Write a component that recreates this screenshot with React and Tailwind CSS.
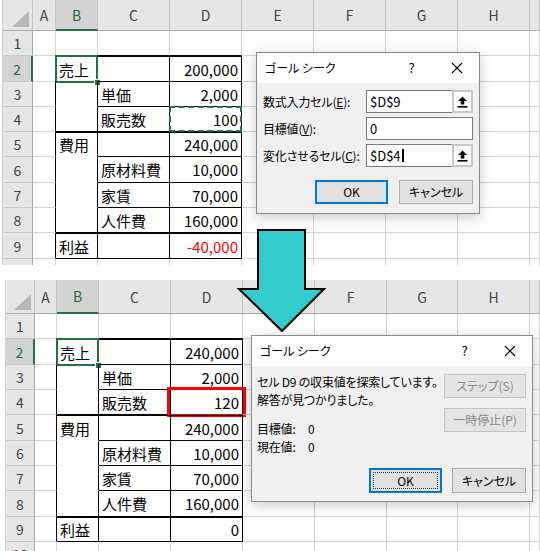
import React from 'react';

const JP = "font-['Noto_Sans_CJK_JP',sans-serif]";
const PALT = '[font-feature-settings:"palt"]';

const TOP_ROWS = [
  { b: '売上', d: '200,000' },
  { c: '単価', d: '2,000' },
  { c: '販売数', d: '100' },
  { b: '費用', d: '240,000' },
  { c: '原材料費', d: '10,000' },
  { c: '家賃', d: '70,000' },
  { c: '人件費', d: '160,000' },
  { b: '利益', d: '-40,000', red: true },
];

const BOTTOM_ROWS = [
  { b: '売上', d: '240,000' },
  { c: '単価', d: '2,000' },
  { c: '販売数', d: '120' },
  { b: '費用', d: '240,000' },
  { c: '原材料費', d: '10,000' },
  { c: '家賃', d: '70,000' },
  { c: '人件費', d: '160,000' },
  { b: '利益', d: '0' },
];

const LETTERS = ['', '', 'A', 'B', 'C', 'D', 'E', 'F', 'G', 'H', ''];

// 0 strip, 1 row header, 2 A, 3 B, 4 C, 5 D ...
function cellBorder(r, c) {
  let right = 'border-r-[#d4d4d4]';
  let bottom = 'border-b-[#d4d4d4]';
  let top = '';
  const inTable = r >= 2 && r <= 9;
  if (inTable && c >= 2 && c <= 5) right = 'border-r-black';
  if (r === 1 && c >= 3 && c <= 5) bottom = 'border-b-black';
  if (inTable && c >= 3 && c <= 5) {
    if (r === 2 || r === 5 || r === 9) top = 'border-t border-t-black';
    if (c === 3) {
      bottom = r === 4 || r === 8 || r === 9 ? 'border-b-black' : 'border-b-white';
    } else {
      bottom = 'border-b-black';
    }
  }
  return `border-r border-b ${right} ${bottom} ${top}`;
}

function Sheet({ cols, headerH, rowHs, rows, mark, height, showLast }) {
  return (
    <div className={`${height} overflow-hidden bg-white ${JP}`}>
      {/* column headers */}
      <div className={`flex ${headerH}`}>
        {cols.map((w, i) => {
          if (i === 0) {
            return <div key={i} className={`${w} h-full shrink-0 bg-white border-r border-[#d4d4d4]`} />;
          }
          if (i === 1) {
            return (
              <div
                key={i}
                className={`${w} h-full shrink-0 relative bg-[#e6e6e6] border-r border-b border-r-[#c4c4c4] border-b-[#ababab]`}
              >
                <svg className="absolute right-[2px] bottom-[3px]" width="18" height="16" viewBox="0 0 18 16">
                  <polygon points="17,0 17,16 0,16" fill="#b9b9b9" />
                </svg>
              </div>
            );
          }
          const sel = i === 3;
          return (
            <div
              key={i}
              className={`${w} h-full shrink-0 flex items-center justify-center text-[14px] leading-none border-r border-r-[#c4c4c4] ${
                sel
                  ? 'bg-[#d3d3d3] text-[#1e6b42] border-b-2 border-b-[#217346]'
                  : 'bg-[#e6e6e6] text-[#444] border-b border-b-[#ababab]'
              }`}
            >
              {LETTERS[i]}
            </div>
          );
        })}
      </div>

      {/* rows */}
      {rowHs.map((h, ri) => {
        const r = ri + 1;
        const row = r >= 2 && r <= 9 ? rows[r - 2] : null;
        return (
          <div key={r} className={`flex ${h}`}>
            {cols.map((w, c) => {
              if (c === 0) {
                return <div key={c} className={`${w} h-full shrink-0 bg-white border-r border-[#d4d4d4]`} />;
              }
              if (c === 1) {
                const sel = r === 2;
                return (
                  <div
                    key={c}
                    className={`${w} h-full shrink-0 flex items-center justify-center text-[14px] leading-none border-b border-b-[#c8c8c8] ${
                      sel
                        ? 'bg-[#d3d3d3] text-[#1e6b42] border-r-2 border-r-[#217346]'
                        : 'bg-[#e6e6e6] text-[#444] border-r border-r-[#ababab]'
                    }`}
                  >
                    {r < 10 || showLast ? r : null}
                  </div>
                );
              }
              let text = null;
              let right = false;
              let red = false;
              if (row) {
                if (c === 3) text = row.b;
                if (c === 4) text = row.c;
                if (c === 5) {
                  text = row.d;
                  right = true;
                  red = !!row.red;
                }
              }
              return (
                <div
                  key={c}
                  className={`${w} h-full shrink-0 relative flex items-center px-[3px] text-[15px] leading-none whitespace-nowrap ${
                    right ? 'justify-end' : ''
                  } ${red ? 'text-[#ff0000]' : 'text-black'} ${cellBorder(r, c)}`}
                >
                  {text}
                  {r === 2 && c === 3 && (
                    <>
                      <div className="absolute left-[-1px] top-[-2px] right-[-1px] bottom-[-2px] border-2 border-[#217346]" />
                      <div className="absolute right-[-4px] bottom-[-5px] w-[7px] h-[7px] bg-[#217346] border border-white" />
                    </>
                  )}
                  {r === 4 && c === 5 && mark === 'ants' && (
                    <div className="absolute -inset-px border-2 border-dashed border-[#217346]" />
                  )}
                  {r === 4 && c === 5 && mark === 'red' && (
                    <div className="absolute left-[-4px] top-[-3px] right-[-4px] bottom-[-3px] border-[3px] border-[#ff0000]" />
                  )}
                </div>
              );
            })}
          </div>
        );
      })}
    </div>
  );
}

function CloseIcon() {
  return (
    <svg width="12" height="12" viewBox="0 0 12 12">
      <path d="M1 1 L11 11 M11 1 L1 11" stroke="#000" strokeWidth="1.1" />
    </svg>
  );
}

function TitleBar({ title }) {
  return (
    <div className="h-[30px] bg-white flex items-center shrink-0">
      <span className="pl-[8px] text-[12px] text-black leading-none whitespace-nowrap">{title}</span>
      <div className="ml-auto w-[45px] h-full flex items-center justify-center text-[13px] text-black">?</div>
      <div className="w-[45px] h-full flex items-center justify-center">
        <CloseIcon />
      </div>
    </div>
  );
}

function CollapseIcon() {
  return (
    <svg width="11" height="12" viewBox="0 0 11 12">
      <path d="M5.5 0.5 L10 5 H7.3 V8.5 H3.7 V5 H1 Z" fill="#000" />
      <rect x="0.5" y="10" width="10" height="1.6" fill="#000" />
    </svg>
  );
}

function RefInput({ value, caret }) {
  return (
    <div className="w-[107px] h-[23px] flex">
      <div className="flex-1 h-full bg-white border border-[#7a7a7a] border-r-0 flex items-center pl-[3px] text-[13px] leading-none text-black">
        {value}
        {caret && <span className="inline-block w-[2px] h-[13px] bg-black ml-[1px]" />}
      </div>
      <div className="w-[21px] h-full bg-white border-2 border-[#c7c7c7] flex items-center justify-center">
        <CollapseIcon />
      </div>
    </div>
  );
}

function WinButton({ children, focus, disabled, w }) {
  return (
    <div
      className={`${w} h-full relative flex items-center justify-center text-[12px] leading-none whitespace-nowrap ${
        focus
          ? 'bg-[#e1e1e1] border-2 border-[#0078d7] text-black'
          : disabled
          ? 'bg-[#e4e4e4] border border-[#c4c4c4] text-[#8a8a8a]'
          : 'bg-[#e1e1e1] border border-[#adadad] text-black'
      }`}
    >
      {children}
    </div>
  );
}

function GoalSeekDialog() {
  return (
    <div
      className={`absolute left-[256px] top-[52px] w-[224px] h-[162px] bg-[#f0f0f0] border border-[#8a8a8a] shadow-[0_3px_12px_rgba(0,0,0,0.22)] flex flex-col ${JP} ${PALT}`}
    >
      <TitleBar title="ゴール シーク" />
      <div className="pl-[6px] pt-[7px] flex flex-col gap-[4px]">
        <div className="flex items-center h-[23px]">
          <span className="w-[103px] text-[12px] leading-none text-black whitespace-nowrap tracking-[-0.2px]">
            数式入力セル(<span className="underline">E</span>):
          </span>
          <RefInput value="$D$9" />
        </div>
        <div className="flex items-center h-[23px]">
          <span className="w-[103px] text-[12px] leading-none text-black whitespace-nowrap tracking-[-0.2px]">
            目標値(<span className="underline">V</span>):
          </span>
          <div className="w-[107px] h-full bg-white border border-[#7a7a7a] flex items-center pl-[3px] text-[13px] leading-none text-black">
            0
          </div>
        </div>
        <div className="flex items-center h-[23px]">
          <span className="w-[103px] text-[12px] leading-none text-black whitespace-nowrap tracking-[-0.2px]">
            変化させるセル(<span className="underline">C</span>):
          </span>
          <RefInput value="$D$4" caret />
        </div>
      </div>
      <div className="mt-[13px] h-[24px] flex justify-end gap-[11px] pr-[6px]">
        <WinButton w="w-[73px]" focus>
          OK
        </WinButton>
        <WinButton w="w-[74px]">キャンセル</WinButton>
      </div>
    </div>
  );
}

function StatusDialog() {
  return (
    <div
      className={`absolute left-[251px] top-[335px] w-[282px] h-[167px] bg-[#f0f0f0] border border-[#8a8a8a] shadow-[0_3px_12px_rgba(0,0,0,0.22)] flex flex-col ${JP} ${PALT}`}
    >
      <TitleBar title="ゴール シーク" />
      <div className="h-[102px] flex shrink-0">
        <div className="flex-1 min-w-0 pl-[5px] pt-[7px] text-[12px] text-black whitespace-nowrap tracking-[-0.2px]">
          <div className="h-[18px] flex items-center leading-none">セル D9 の収束値を探索しています。</div>
          <div className="h-[18px] flex items-center leading-none">解答が見つかりました。</div>
          <div className="h-[18px] mt-[11px] flex items-center leading-none">
            <span className="w-[51px]">目標値:</span>0
          </div>
          <div className="h-[18px] flex items-center leading-none">
            <span className="w-[51px]">現在値:</span>0
          </div>
        </div>
        <div className="w-[82px] shrink-0 mr-[6px] pt-[8px] flex flex-col gap-[10px]">
          <div className="h-[24px]">
            <WinButton w="w-[82px]" disabled>
              ステップ(S)
            </WinButton>
          </div>
          <div className="h-[24px]">
            <WinButton w="w-[82px]" disabled>
              一時停止(P)
            </WinButton>
          </div>
        </div>
      </div>
      <div className="h-[25px] flex justify-end gap-[10px] pr-[6px]">
        <WinButton w="w-[73px]" focus>
          <div className="absolute inset-[2px] border border-dotted border-[#333]" />
          OK
        </WinButton>
        <WinButton w="w-[74px]">キャンセル</WinButton>
      </div>
    </div>
  );
}

function DownArrow() {
  return (
    <svg
      className="absolute left-[236px] top-[228px]"
      width="92"
      height="106"
      viewBox="236 228 92 106"
    >
      <polygon
        points="258,230 305,230 305,289 324,289 282,331 239,289 258,289"
        fill="#33cccc"
        stroke="#000"
        strokeWidth="2"
        strokeLinejoin="miter"
      />
    </svg>
  );
}

export default function App() {
  const topCols = ['w-[3px]', 'w-[30px]', 'w-[23px]', 'w-[42px]', 'w-[72px]', 'w-[72px]', 'w-[72px]', 'w-[72px]', 'w-[72px]', 'w-[72px]', 'w-[10px]'];
  const bottomCols = ['w-[6px]', 'w-[29px]', 'w-[22px]', 'w-[42px]', 'w-[72px]', 'w-[72px]', 'w-[72px]', 'w-[72px]', 'w-[71px]', 'w-[72px]', 'w-[10px]'];
  const topRowHs = ['h-[25px]', 'h-[26px]', 'h-[25px]', 'h-[25px]', 'h-[25px]', 'h-[26px]', 'h-[25px]', 'h-[25px]', 'h-[26px]', 'h-[25px]'];
  const bottomRowHs = ['h-[25px]', 'h-[26px]', 'h-[25px]', 'h-[25px]', 'h-[26px]', 'h-[25px]', 'h-[25px]', 'h-[26px]', 'h-[25px]', 'h-[25px]'];

  return (
    <div className="relative w-[540px] h-[551px] overflow-hidden bg-white">
      <Sheet cols={topCols} headerH="h-[31px]" rowHs={topRowHs} rows={TOP_ROWS} mark="ants" height="h-[265px]" />
      <div className="h-[15px] bg-white" />
      <Sheet cols={bottomCols} headerH="h-[34px]" rowHs={bottomRowHs} rows={BOTTOM_ROWS} mark="red" height="h-[271px]" showLast />
      <DownArrow />
      <GoalSeekDialog />
      <StatusDialog />
    </div>
  );
}
